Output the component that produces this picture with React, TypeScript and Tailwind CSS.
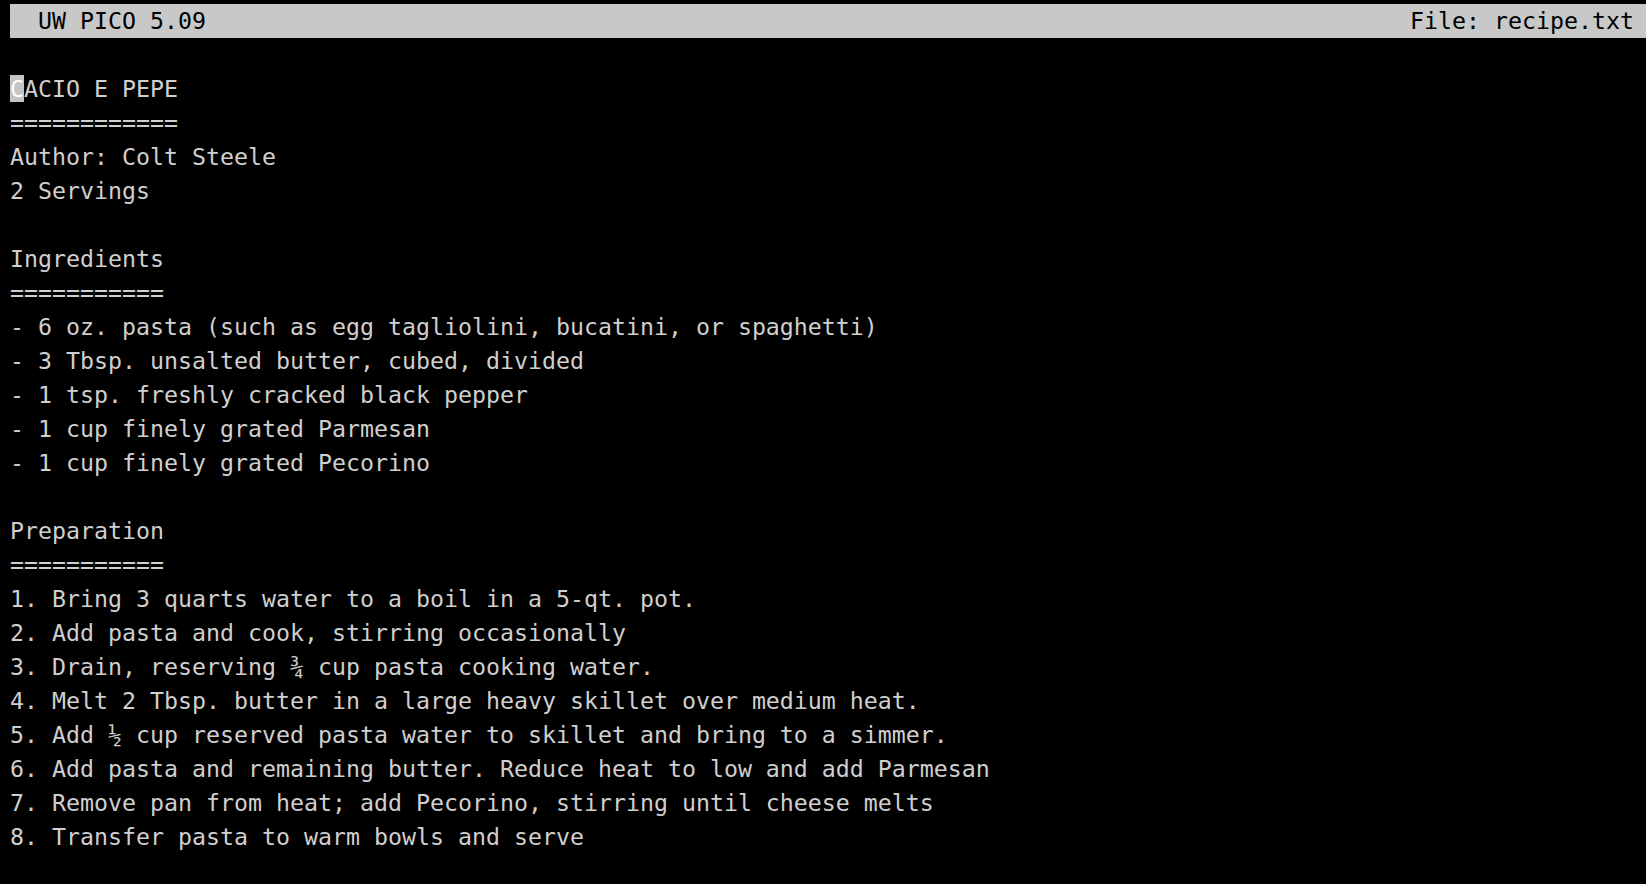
import React from "react";

const lines: string[] = [
  "",
  "CACIO E PEPE",
  "============",
  "Author: Colt Steele",
  "2 Servings",
  "",
  "Ingredients",
  "===========",
  "- 6 oz. pasta (such as egg tagliolini, bucatini, or spaghetti)",
  "- 3 Tbsp. unsalted butter, cubed, divided",
  "- 1 tsp. freshly cracked black pepper",
  "- 1 cup finely grated Parmesan",
  "- 1 cup finely grated Pecorino",
  "",
  "Preparation",
  "===========",
  "1. Bring 3 quarts water to a boil in a 5-qt. pot.",
  "2. Add pasta and cook, stirring occasionally",
  "3. Drain, reserving \u00be cup pasta cooking water.",
  "4. Melt 2 Tbsp. butter in a large heavy skillet over medium heat.",
  "5. Add \u00bd cup reserved pasta water to skillet and bring to a simmer.",
  "6. Add pasta and remaining butter. Reduce heat to low and add Parmesan",
  "7. Remove pan from heat; add Pecorino, stirring until cheese melts",
  "8. Transfer pasta to warm bowls and serve",
];

export default function App() {
  return (
    <div
      className="w-[1646px] h-[884px] bg-black text-[#cfcfcf] pl-[10px] pt-[4px] overflow-hidden"
      style={{ fontFamily: '"DejaVu Sans Mono", "Liberation Mono", monospace' }}
    >
      <div className="flex justify-between items-center h-[34px] bg-[#c8c8c8] text-black text-[23.25px] leading-[34px] pr-[12px] whitespace-pre">
        <span>{"  UW PICO 5.09"}</span>
        <span>File: recipe.txt</span>
      </div>
      {lines.map((l, i) => (
        <div key={i} className="h-[34px] text-[23.25px] leading-[34px] whitespace-pre">
          {i === 1 ? (
            <>
              <span className="bg-[#c4c4c4] text-white">C</span>
              {l.slice(1)}
            </>
          ) : (
            l
          )}
        </div>
      ))}
    </div>
  );
}
